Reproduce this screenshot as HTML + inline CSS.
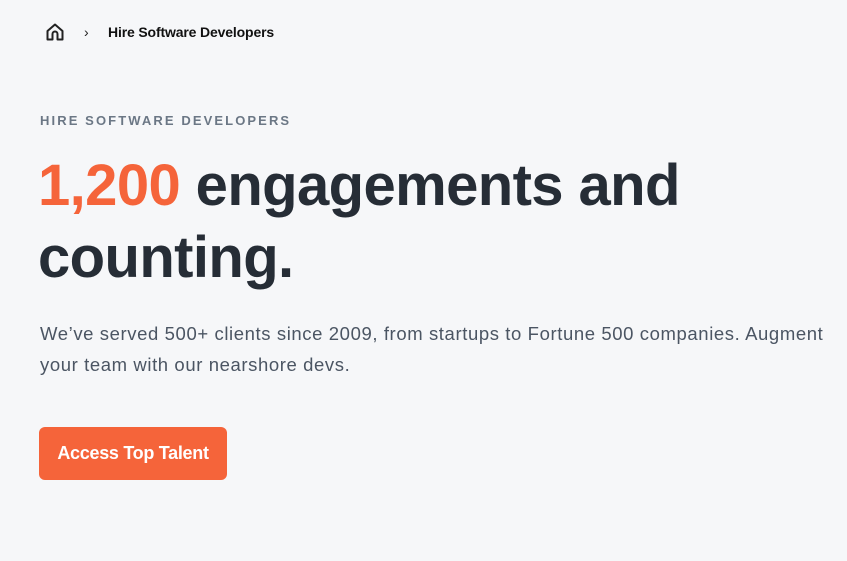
<!DOCTYPE html>
<html><head><meta charset="utf-8"><style>
html,body{margin:0;padding:0;background:#f6f7f9;width:847px;height:561px;overflow:hidden;font-family:"Liberation Sans",sans-serif}
.bc{position:absolute;top:22px;left:45px;display:flex;align-items:center}
.bc .t{position:absolute;left:63px;top:2px;font-size:14px;font-weight:bold;color:#111;white-space:nowrap;letter-spacing:-0.15px}
.chev{position:absolute;left:39px;top:2px;font-size:14px;color:#222}
.eyebrow{position:absolute;left:40px;top:113px;font-size:13px;font-weight:bold;letter-spacing:2.1px;color:#6b7785}
h1{position:absolute;left:38px;top:150px;margin:0;font-size:58px;font-weight:bold;line-height:72px;color:#262d36;letter-spacing:-0.6px;width:800px}
h1 span{color:#f5643a}
p{position:absolute;left:40px;top:318px;margin:0;font-size:18.5px;line-height:31px;color:#4b5563;width:810px;letter-spacing:0.6px;white-space:nowrap}
.btn{position:absolute;left:39px;top:427px;width:188px;height:53px;background:#f5643a;border-radius:6px;color:#fff;font-size:18px;font-weight:bold;display:flex;align-items:center;justify-content:center;letter-spacing:-0.3px}
</style></head><body>
<div class="bc">
<svg width="20" height="20" viewBox="0 0 20 20" fill="none" stroke="#222" stroke-width="2" stroke-linejoin="round"><path d="M2.5 9 L10 2.5 L17.5 9 V17.5 H12.5 V12 A2.5 2.5 0 0 0 7.5 12 V17.5 H2.5 Z"/></svg>
<span class="chev">›</span>
<span class="t">Hire Software Developers</span>
</div>
<div class="eyebrow">HIRE SOFTWARE DEVELOPERS</div>
<h1><span>1,200</span> engagements and<br>counting.</h1>
<p>We’ve served 500+ clients since 2009, from startups to Fortune 500 companies. Augment<br>your team with our nearshore devs.</p>
<div class="btn">Access Top Talent</div>
</body></html>
